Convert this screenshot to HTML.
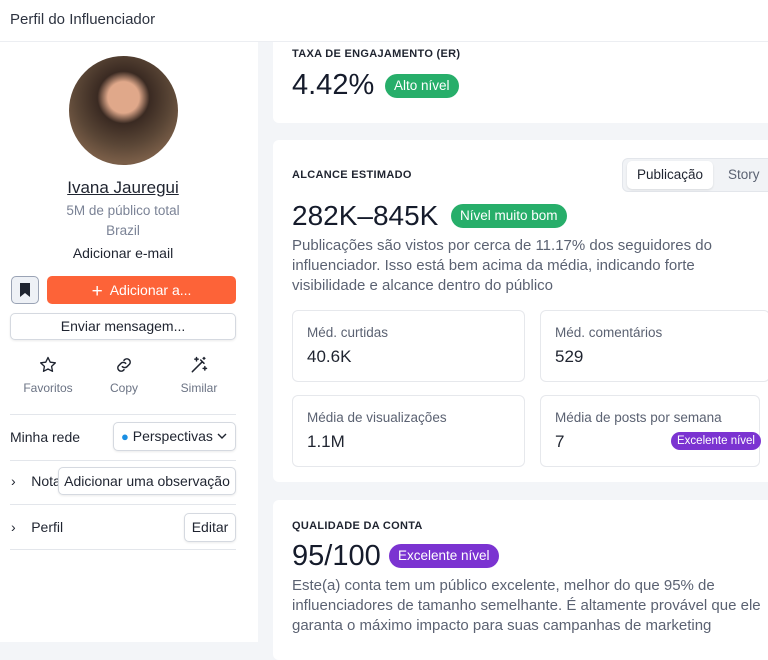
<!DOCTYPE html>
<html><head><meta charset="utf-8"><style>
*{box-sizing:border-box;margin:0;padding:0}
body{width:768px;height:639px;overflow:hidden;font-family:"Liberation Sans",sans-serif;background:#f3f5f8;position:relative;color:#1f2430}
.hdr{position:absolute;left:0;top:0;width:768px;height:42px;background:#fff;border-bottom:1px solid #eceef2;font-size:15px;color:#2d3340;padding:11px 0 0 10px;z-index:2}
.left{position:absolute;left:0;top:42px;width:258px;height:600px;background:#fff}
.abs{position:absolute}
.btn{position:absolute;border:1px solid #d5d9e0;border-radius:5px;background:#fff;box-shadow:0 1px 2px rgba(0,0,0,.08);font-size:14px;color:#1f2430;text-align:center;white-space:nowrap}
.hr{position:absolute;left:10px;width:226px;height:1px;background:#e3e6eb}
.card{position:absolute;background:#fff;border-radius:6px;left:273px;width:520px}
.lbl{position:absolute;font-size:11px;letter-spacing:.3px;color:#1f2430;font-weight:bold}
.big{position:absolute;font-size:29px;color:#151b2b;white-space:nowrap}
.pill{position:absolute;border-radius:12px;color:#fff;font-size:13.5px;padding:0 9px;height:24px;line-height:24px;white-space:nowrap}
.g{background:#27ae6a}.p{background:#7b33d1}
.desc{position:absolute;font-size:15px;line-height:20px;color:#5b6272}
.sub{position:absolute;border:1px solid #e6e8ec;border-radius:6px;background:#fff;width:233px;height:72px}
.sub .t{position:absolute;left:14px;top:14px;font-size:13.5px;color:#5b6272;white-space:nowrap}
.sub .v{position:absolute;left:14px;top:36px;font-size:17px;color:#1f2430}
</style></head><body>
<div class="hdr">Perfil do Influenciador</div>
<div class="left">
 <div class="abs" style="left:69px;top:14px;width:109px;height:109px;border-radius:50%;background:radial-gradient(circle at 50% 38%,#e0a88a 0 18%,#3a2a22 30%,#5a4636 55%,#7a5e48 75%,#6b5444)"></div>
 <div class="abs" style="left:0;width:246px;top:136px;text-align:center;font-size:17px;text-decoration:underline;color:#1f2430">Ivana Jauregui</div>
 <div class="abs" style="left:0;width:246px;top:161px;text-align:center;font-size:13.5px;color:#7b8396">5M de público total</div>
 <div class="abs" style="left:0;width:246px;top:181px;text-align:center;font-size:13.5px;color:#7b8396">Brazil</div>
 <div class="abs" style="left:0;width:246px;top:203px;text-align:center;font-size:14px;color:#1f2430">Adicionar e-mail</div>
 <div class="abs" style="left:11px;top:234px;width:28px;height:28px;border:1px solid #9aa3b5;border-radius:5px;background:#eef1f6"><svg width="26" height="26" viewBox="0 0 26 26"><path d="M8 6h10v14l-5-4-5 4z" fill="#1f2430"/></svg></div>
 <div class="abs" style="left:47px;top:234px;width:189px;height:28px;border-radius:5px;background:#fd6338;color:#fff;font-size:14px;text-align:center;line-height:28px"><span style="font-size:19px;vertical-align:-2px">+</span>&nbsp; Adicionar a...</div>
 <div class="btn" style="left:10px;top:271px;width:226px;height:27px;line-height:25px">Enviar mensagem...</div>
 <svg class="abs" style="left:38px;top:313px" width="20" height="20" viewBox="0 0 24 24"><path d="M12 3l2.7 5.6 6.1.8-4.5 4.2 1.1 6L12 16.8 6.6 19.6l1.1-6L3.2 9.4l6.1-.8z" fill="none" stroke="#1f2430" stroke-width="1.6" stroke-linejoin="round"/></svg>
 <svg class="abs" style="left:114px;top:313px" width="20" height="20" viewBox="0 0 24 24"><path d="M10 14a4 4 0 0 0 5.6 0l3-3a4 4 0 0 0-5.6-5.6l-1 1M14 10a4 4 0 0 0-5.6 0l-3 3a4 4 0 0 0 5.6 5.6l1-1" fill="none" stroke="#1f2430" stroke-width="1.8" stroke-linecap="round"/></svg>
 <svg class="abs" style="left:189px;top:313px" width="20" height="20" viewBox="0 0 24 24"><path d="M4 20L16 8M14 6l4 4M9 3v4M7 5h4M19 14v4M17 16h4M18 3v2M17 4h2" fill="none" stroke="#1f2430" stroke-width="1.8" stroke-linecap="round"/></svg>
 <div class="abs" style="left:18px;width:60px;top:339px;text-align:center;font-size:12px;color:#6b7384">Favoritos</div>
 <div class="abs" style="left:94px;width:60px;top:339px;text-align:center;font-size:12px;color:#6b7384">Copy</div>
 <div class="abs" style="left:169px;width:60px;top:339px;text-align:center;font-size:12px;color:#6b7384">Similar</div>
 <div class="hr" style="top:372px"></div>
 <div class="abs" style="left:10px;top:387px;font-size:14px">Minha rede</div>
 <div class="btn" style="left:113px;top:380px;width:123px;height:29px;line-height:27px;text-align:left;padding-left:7px"><span style="color:#1a8fe3;font-size:13px">●</span> Perspectivas <svg width="10" height="8" viewBox="0 0 10 8" style="vertical-align:1px"><path d="M1 2l4 4 4-4" fill="none" stroke="#1f2430" stroke-width="1.4"/></svg></div>
 <div class="hr" style="top:418px"></div>
 <div class="abs" style="left:11px;top:431px;font-size:14px">›&nbsp;&nbsp;&nbsp;&nbsp;Nota</div>
 <div class="btn" style="left:58px;top:425px;width:178px;height:28px;line-height:26px">Adicionar uma observação</div>
 <div class="hr" style="top:462px"></div>
 <div class="abs" style="left:11px;top:477px;font-size:14px">›&nbsp;&nbsp;&nbsp;&nbsp;Perfil</div>
 <div class="btn" style="left:184px;top:471px;width:52px;height:29px;line-height:27px">Editar</div>
 <div class="hr" style="top:507px"></div>
</div>
<div class="card" style="top:30px;height:93px">
 <div class="lbl" style="left:19px;top:18px">TAXA DE ENGAJAMENTO (ER)</div>
 <div class="big" style="left:19px;top:39px">4.42%</div>
 <div class="pill g" style="left:112px;top:44px">Alto nível</div>
</div>
<div class="card" style="top:140px;height:342px">
 <div class="lbl" style="left:19px;top:29px">ALCANCE ESTIMADO</div>
 <div class="abs" style="left:349px;top:18px;width:180px;height:34px;background:#f1f3f6;border:1px solid #e3e6eb;border-radius:6px"></div>
 <div class="abs" style="left:354px;top:21px;width:86px;height:28px;background:#fff;border-radius:5px;box-shadow:0 1px 2px rgba(0,0,0,.1);font-size:13.5px;text-align:center;line-height:28px">Publicação</div>
 <div class="abs" style="left:455px;top:27px;font-size:13.5px;color:#5b6272">Story</div>
 <div class="big" style="left:19px;top:60px;font-size:28px">282K–845K</div>
 <div class="pill g" style="left:178px;top:64px">Nível muito bom</div>
 <div class="desc" style="left:19px;top:96px;width:480px">Publicações são vistos por cerca de 11.17% dos seguidores do influenciador. Isso está bem acima da média, indicando forte visibilidade e alcance dentro do público</div>
 <div class="sub" style="left:19px;top:170px"><div class="t">Méd. curtidas</div><div class="v">40.6K</div></div>
 <div class="sub" style="left:267px;top:170px;width:230px"><div class="t">Méd. comentários</div><div class="v">529</div></div>
 <div class="sub" style="left:19px;top:255px"><div class="t">Média de visualizações</div><div class="v">1.1M</div></div>
 <div class="sub" style="left:267px;top:255px;width:220px"><div class="t">Média de posts por semana</div><div class="v">7</div><div class="pill p" style="left:130px;top:36px;height:18px;line-height:18px;font-size:11.5px;padding:0 6px">Excelente nível</div></div>
</div>
<div class="card" style="top:500px;height:160px">
 <div class="lbl" style="left:19px;top:20px">QUALIDADE DA CONTA</div>
 <div class="big" style="left:19px;top:40px">95/100</div>
 <div class="pill p" style="left:116px;top:44px">Excelente nível</div>
 <div class="desc" style="left:19px;top:76px;width:490px;white-space:nowrap">Este(a) conta tem um público excelente, melhor do que 95% de<br>influenciadores de tamanho semelhante. É altamente provável que ele<br>garanta o máximo impacto para suas campanhas de marketing</div>
</div>
</body></html>
